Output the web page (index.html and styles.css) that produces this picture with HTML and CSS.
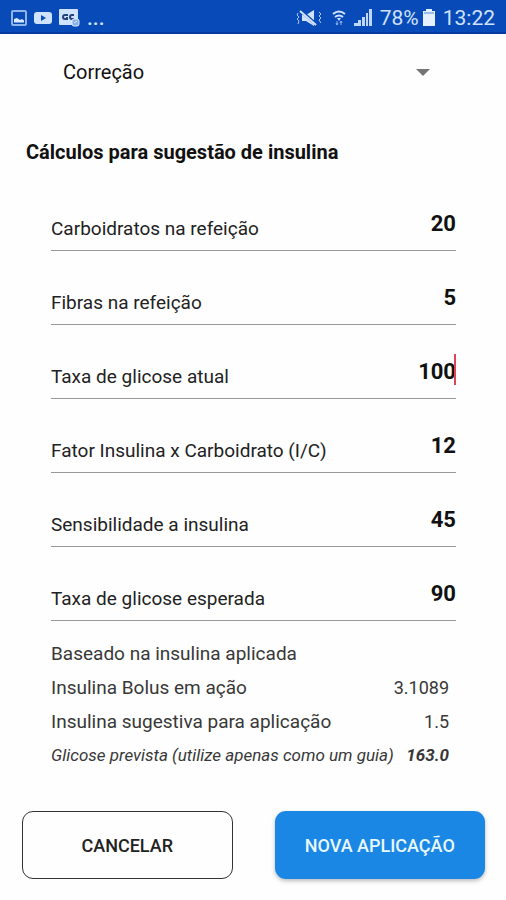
FILE: index.html
```html
<!DOCTYPE html>
<html lang="pt-BR">
<head>
<meta charset="utf-8">
<meta name="viewport" content="width=device-width, initial-scale=1">
<title>Cálculos para sugestão de insulina</title>
<link rel="stylesheet" href="styles.css">
</head>
<body>
<header class="status">
  <div class="status-group notices">
    <svg width="16" height="16" viewBox="0 0 16 16" aria-hidden="true"><rect x="1" y="1" width="14" height="14" rx="1" fill="none" stroke="#8fb4ec" stroke-width="2"/><path d="M3 12.500V9l3-1 3 2 2-1 2 1.500v2z" fill="#dcebff"/></svg>
    <svg width="18" height="14" viewBox="0 0 18 14" aria-hidden="true"><rect y="1" width="18" height="12" rx="3" fill="#cfe2ff"/><path d="M7 4l5 3-5 3z" fill="#0a4bb8"/></svg>
    <svg width="21" height="18" viewBox="0 0 21 18" aria-hidden="true"><rect width="19" height="16" rx="1" fill="#cfe2ff"/><path d="M9 6H6a2 2 0 0 0 0 4h2V8M15 6h-2a2 2 0 0 0 0 4h2" fill="none" stroke="#24447c" stroke-width="2"/><rect x="13" y="10" width="7" height="7" rx="2" fill="#89afe8" stroke="#dcebff"/><path d="M15 14l3-2" stroke="#dcebff"/></svg>
    <span class="more">...</span>
  </div>
  <div class="status-group">
    <svg class="mute" width="26" height="18" viewBox="0 0 26 18" aria-hidden="true"><path d="M6 6h4l8-5v16l-8-5H6z" fill="#cfe2ff"/><path d="M5 2l16 14" stroke="#0a4bb8" stroke-width="3"/><path d="M4 2l16 14" stroke="#cfe2ff" stroke-width="2"/><path d="M2 4l-1 2 2 2-2 2 2 2-1 3M23 3l2 2-2 2 2 2-2 2 2 3" fill="none" stroke="#a9c8f5" stroke-width="1"/></svg>
    <svg class="wifi" width="14" height="18" viewBox="0 0 14 18" aria-hidden="true"><path d="M1 5q6-5 12 0M3 8q4-3 8 0" fill="none" stroke="#cfe2ff" stroke-width="2"/><path d="M5 9h4l-2 3z" fill="#cfe2ff"/><path d="M5 12v4M9 12v4M4 14l1 2 1-2M8 14l1-2 1 2" fill="none" stroke="#8bb4ee"/></svg>
    <svg class="signal" width="18" height="17" viewBox="0 0 18 17" aria-hidden="true"><path d="M0 14h4v3H0zM4 11h3v6H4zM8 8h3v9H8zM12 4h2v13h-2zM15 0h3v17h-3z" fill="#bdd7fb"/></svg>
    <span>78%</span>
    <svg class="battery" width="12" height="17" viewBox="0 0 12 17" aria-hidden="true"><path d="M3 0h6v2h3v15H0V2h3z" fill="#e6f1ff"/><path d="M1 3h10v2H1z" fill="#9bbdf0"/></svg>
    <time>13:22</time>
  </div>
</header>
<main>
  <div class="picker">
    <select aria-label="Tipo de aplicação"><option>Correção</option></select>
    <svg class="arrow" width="14" height="7" viewBox="0 0 14 7" aria-hidden="true"><path d="M0 0h14L7 7z" fill="#757575"/></svg>
  </div>
  <form>
    <h1>Cálculos para sugestão de insulina</h1>
    <div class="fields">
      <div class="field"><label for="carbs">Carboidratos na refeição</label><input id="carbs" inputmode="decimal" value="20"></div>
      <div class="field"><label for="fiber">Fibras na refeição</label><input id="fiber" inputmode="decimal" value="5"></div>
      <div class="field active"><label for="current">Taxa de glicose atual</label><input id="current" inputmode="decimal" value="100"></div>
      <div class="field"><label for="factor">Fator Insulina x Carboidrato (I/C)</label><input id="factor" inputmode="decimal" value="12"></div>
      <div class="field"><label for="sensitivity">Sensibilidade a insulina</label><input id="sensitivity" inputmode="decimal" value="45"></div>
      <div class="field"><label for="target">Taxa de glicose esperada</label><input id="target" inputmode="decimal" value="90"></div>
    </div>
    <div class="results">
      <p>Baseado na insulina aplicada</p>
      <p><span>Insulina Bolus em ação</span><output>3.1089</output></p>
      <p><span>Insulina sugestiva para aplicação</span><output>1.5</output></p>
      <p class="forecast"><span>Glicose prevista (utilize apenas como um guia)</span><output>163.0</output></p>
    </div>
    <div class="actions">
      <button type="button" class="cancel">CANCELAR</button>
      <button type="button" class="apply">NOVA APLICAÇÃO</button>
    </div>
  </form>
</main>
</body>
</html>
```
FILE: styles.css
```css
* { box-sizing: border-box; }
body { margin: 0; background: #fefefe; color: #111; font-family: Roboto, sans-serif; font-size: 19px; }
.status { display: flex; justify-content: space-between; align-items: center; height: 34px; padding: 3px 11px 0; background: #084bb8; border-bottom: 2px solid #0638a4; color: #cfe2ff; font-size: 21px; }
.status-group { display: flex; align-items: center; gap: 4px; }
.status svg { display: block; flex: none; }
.notices { gap: 7px; }
.more { font-weight: 500; }
.wifi { margin: 0 4px 0 6px; }
.signal { margin-right: 4px; }
.battery { margin-right: 4px; }
.picker { display: grid; align-items: center; height: 76px; padding: 0 76px 0 63px; }
.picker > * { grid-area: 1 / 1; }
.picker select { width: 100%; height: 48px; padding: 0; border: 0; background: transparent; appearance: none; color: #111; font: 20px Roboto, sans-serif; }
.arrow { justify-self: end; pointer-events: none; }
h1 { margin: 0; padding: 28px 26px 0; height: 67px; font-size: 20px; line-height: 28px; font-weight: 700; }
.fields, .results { padding: 0 50px 0 51px; }
.field { position: relative; display: flex; align-items: flex-end; justify-content: space-between; height: 74px; border-bottom: 1px solid #999; }
.field label { padding-bottom: 9px; line-height: 24px; white-space: nowrap; color: #222; }
.field input { flex: 1; min-width: 0; height: 32px; margin-bottom: 11px; padding: 0; border: 0; background: transparent; text-align: right; color: #111; font: 700 22px Roboto, sans-serif; }
.active::after { content: ""; position: absolute; right: 0; bottom: 13px; width: 2px; height: 31px; background: #e04355; }
.results { padding-top: 16px; color: #383838; }
.results p { display: flex; justify-content: space-between; gap: 8px; margin: 0; padding-right: 7px; line-height: 34px; white-space: nowrap; }
.results output { font-size: 18px; }
.results .forecast { font-size: 17px; line-height: 32px; font-style: italic; }
.forecast output { font-size: 17px; font-weight: 700; }
.actions { display: grid; grid-template-columns: 1fr 1fr; gap: 42px; padding: 40px 21px 20px 22px; }
.actions button { height: 68px; border-radius: 11px; font: 500 18px Roboto, sans-serif; }
.cancel { border: 1px solid #333; background: #fefefe; color: #222; }
.apply { border: 0; background: #1b87e5; color: #e8f8ff; box-shadow: 0 2px 4px #0004; }
```
